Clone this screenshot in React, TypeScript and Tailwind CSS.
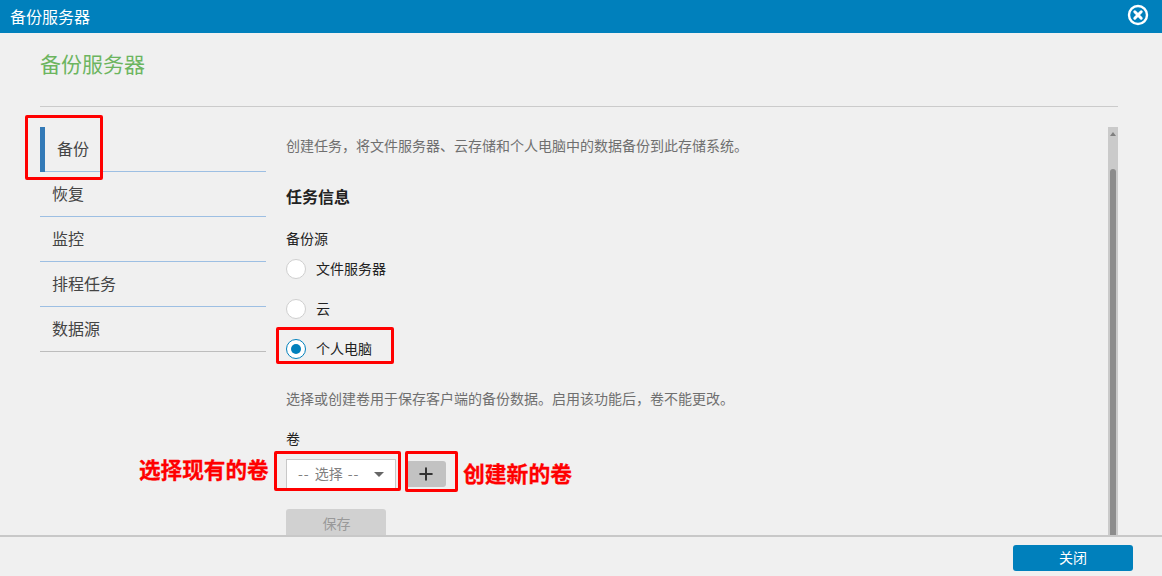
import { FiPlus } from "react-icons/fi";

const tabs = ["恢复", "监控", "排程任务", "数据源"];

const sources = [
  { label: "文件服务器", checked: false },
  { label: "云", checked: false },
  { label: "个人电脑", checked: true },
];

const App = () => {
  return (
    <div
      className="relative w-[1162px] h-[576px] overflow-hidden bg-[#f0f0f0] flex flex-col"
      style={{ fontFamily: '"Noto Sans CJK SC", "Noto Sans", sans-serif' }}
    >
      <header className="h-[33px] shrink-0 bg-[#0080bc] flex items-center justify-between pl-[10px] pr-[13px] text-white">
        <span className="text-[16px] leading-none pb-[2px]">备份服务器</span>
        <svg width="22" height="22" viewBox="0 0 22 22" className="-mt-[4px]">
          <circle cx="11" cy="11" r="9" fill="none" stroke="#fff" strokeWidth="2.4" />
          <path d="M7.8 7.8 14.2 14.2M14.2 7.8 7.8 14.2" stroke="#fff" strokeWidth="3" strokeLinecap="round" />
        </svg>
      </header>

      <main className="flex-1 min-h-0 pl-[40px] pr-[44px] flex flex-col">
        <div className="h-[74px] shrink-0 border-b border-[#cbcbcb] pt-[16px]">
          <h1 className="text-[21px] leading-[28px] text-[#6cb55f]">备份服务器</h1>
        </div>

        <div className="flex-1 min-h-0 flex pt-[20px]">
          <nav className="w-[226px] shrink-0 text-[16px] text-[#444]">
            <div className="h-[45px] border-b border-[#9dbfe3] flex">
              <div className="w-[5px] h-[45px] bg-[#337ab7]" />
              <span className="pl-[12px] pt-[10px] leading-[22px]">备份</span>
            </div>
            {tabs.map((tab, index) => (
              <div
                key={tab}
                className={`h-[45px] border-b pl-[12px] pt-[10px] leading-[22px] ${
                  index === tabs.length - 1 ? "border-[#bdbdbd]" : "border-[#9dbfe3]"
                }`}
              >
                {tab}
              </div>
            ))}
          </nav>

          <div className="flex-1 min-w-0 pl-[20px] overflow-hidden">
            <p className="text-[14px] leading-[18px] text-[#6f6f6f] mt-[9px]">
              创建任务，将文件服务器、云存储和个人电脑中的数据备份到此存储系统。
            </p>
            <h2 className="text-[16px] leading-[24px] font-bold text-[#222] mt-[30px]">任务信息</h2>
            <div className="text-[14px] leading-[18px] text-[#222] mt-[21px]">备份源</div>
            <div className="mt-[12px] flex flex-col gap-[20px]">
              {sources.map((source) => (
                <label key={source.label} className="flex items-center gap-[10px] h-[20px] text-[14px] text-[#222]">
                  <span
                    className={`w-[20px] h-[20px] rounded-full bg-white border flex items-center justify-center ${
                      source.checked ? "border-[#0080bc]" : "border-[#cfcfcf]"
                    }`}
                  >
                    {source.checked && <span className="w-[10px] h-[10px] rounded-full bg-[#0080bc]" />}
                  </span>
                  <span className="pb-[2px]">{source.label}</span>
                </label>
              ))}
            </div>
            <p className="text-[14px] leading-[18px] text-[#6f6f6f] mt-[30px]">
              选择或创建卷用于保存客户端的备份数据。启用该功能后，卷不能更改。
            </p>
            <div className="text-[14px] leading-[18px] text-[#222] mt-[22px]">卷</div>
            <div className="mt-[12px] flex items-center gap-[10px]">
              <div className="w-[110px] h-[30px] bg-white border border-[#c8c8c8] flex items-center justify-between pl-[11px] pr-[11px] text-[14px] text-[#808080]">
                <span className="flex gap-[5px] pb-[2px]">
                  <span className="tracking-[1px]">--</span>
                  <span>选择</span>
                  <span className="tracking-[1px]">--</span>
                </span>
                <span className="w-0 h-0 border-x-[5px] border-x-transparent border-t-[5px] border-t-[#666]" />
              </div>
              <button className="w-[40px] h-[26px] bg-[#c2c2c2] rounded-[3px] flex items-center justify-center text-[#333]">
                <FiPlus size={20} strokeWidth={2.4} />
              </button>
            </div>
            <button className="block mt-[20px] w-[100px] h-[30px] bg-[#d1d1d1] rounded-[3px] text-[14px] text-[#999] pb-[2px] pl-[1px]">
              保存
            </button>
          </div>

          <div className="w-[10px] shrink-0 bg-[#cacaca] relative flex flex-col items-center">
            <span className="absolute top-[5px] w-0 h-0 border-x-[3px] border-x-transparent border-b-[4px] border-b-[#7f7f7f]" />
            <div className="mt-[42px] w-[6px] flex-1 bg-[#8c8c8c] rounded-t-[3px]" />
          </div>
        </div>
      </main>

      <footer className="h-[41px] shrink-0 border-t-2 border-[#c8c8c8] flex items-start justify-end pt-[8px] pr-[29px] relative">
        <button className="w-[120px] h-[26px] bg-[#0080bc] rounded-[3px] text-white text-[14px] pb-[2px]">关闭</button>
      </footer>

      {/* red annotations drawn over the screenshot */}
      <div className="absolute left-[25px] top-[115px] w-[78px] h-[65px] border-[3px] border-[#ff0000] rounded-[2px]" />
      <div className="absolute left-[276px] top-[327px] w-[118px] h-[37px] border-[3px] border-[#ff0000] rounded-[2px]" />
      <div className="absolute left-[274px] top-[451px] w-[127px] h-[40px] border-[3px] border-[#ff0000] rounded-[2px]" />
      <div className="absolute left-[405px] top-[451px] w-[53px] h-[41px] border-[3px] border-[#ff0000] rounded-[2px]" />
      <span className="absolute left-[139px] top-[454px] text-[21.6px] leading-[30px] font-bold text-[#ff0000] [-webkit-text-stroke:0.3px_#ff0000]">
        选择现有的卷
      </span>
      <span className="absolute left-[463px] top-[458px] text-[21.8px] leading-[30px] font-bold text-[#ff0000] [-webkit-text-stroke:0.3px_#ff0000]">
        创建新的卷
      </span>
    </div>
  );
};

export default App;
